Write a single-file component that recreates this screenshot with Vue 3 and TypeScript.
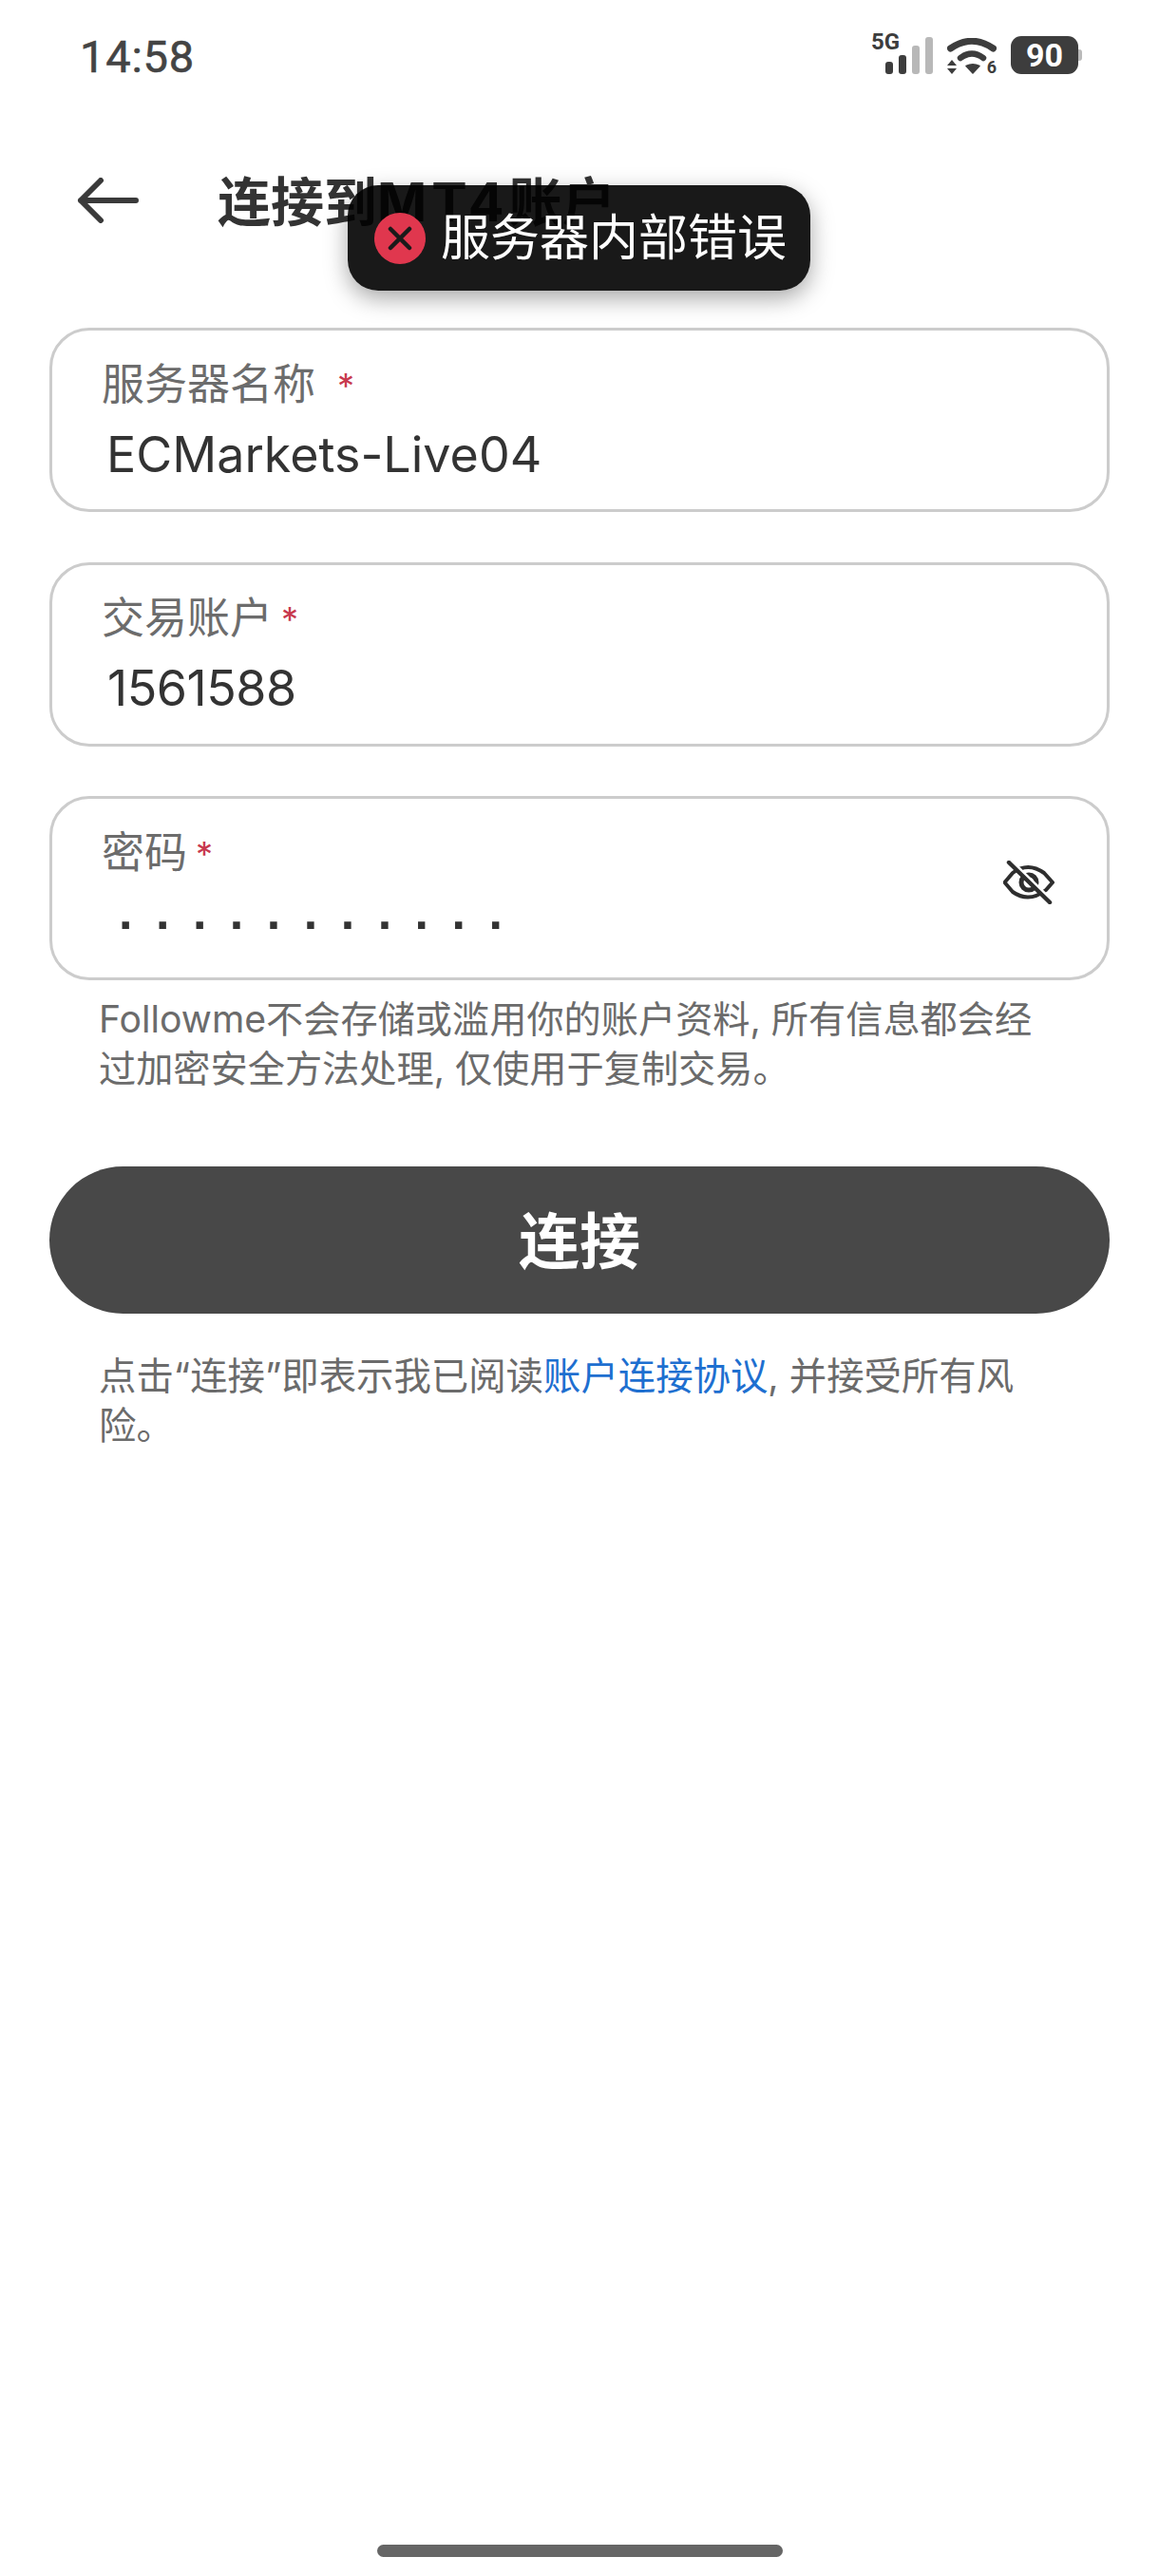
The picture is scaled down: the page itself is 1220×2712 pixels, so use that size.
<script setup lang="ts">
interface Field {
  label: string
  value: string
  kind: string
}
const fields: Field[] = [
  { label: '服务器名称', value: 'ECMarkets-Live04', kind: 'wide' },
  { label: '交易账户', value: '1561588', kind: 'num' },
  { label: '密码', value: '...........', kind: 'dots' },
]
</script>

<template>
  <div class="page">
    <header class="status">
      <span class="time">14:58</span>
      <div class="status-icons">
        <div class="signal">
          <span class="five-g">5G</span>
          <div class="bars">
            <i class="bar b1"></i><i class="bar b2"></i><i class="bar b3"></i><i class="bar b4"></i>
          </div>
        </div>
        <div class="wifi-box">
          <svg class="wifi" width="52" height="38" viewBox="0 0 52 38">
            <path d="M3.5 11 Q26 -4.5 48.5 11" fill="none" stroke="#3d3d3d" stroke-width="7" stroke-linecap="round" />
            <path d="M14 21 Q26 12 38 21" fill="none" stroke="#3d3d3d" stroke-width="6.5" stroke-linecap="round" />
            <path d="M20 29.5 Q27 26 34 29.5 L27 37 Z" fill="#3d3d3d" stroke="#3d3d3d" stroke-width="1.5" stroke-linejoin="round" />
            <path d="M0 29 L5 23 L10 29 Z M0 32 L10 32 L5 38 Z" fill="#3d3d3d" />
          </svg>
          <span class="wifi-six">6</span>
        </div>
        <div class="battery">
          <span class="battery-body">90</span>
          <i class="battery-nub"></i>
        </div>
      </div>
    </header>

    <div class="topbar">
      <svg class="back" width="66" height="48" viewBox="0 0 66 48">
        <path d="M62 24 H4 M25 3 L4 24 L25 45" fill="none" stroke="#3a3a3a" stroke-width="6" stroke-linecap="round" stroke-linejoin="round" />
      </svg>
      <h1 class="title">连接到<span class="title-latin">MT4</span>账户</h1>
    </div>

    <form class="form" @submit.prevent>
      <div v-for="f in fields" :key="f.label" class="field">
        <div class="field-main">
          <div class="label" :class="'label-' + f.kind">{{ f.label }}<span class="star">*</span></div>
          <div class="value" :class="f.kind">{{ f.value }}</div>
        </div>
        <svg v-if="f.kind === 'dots'" class="eye" width="54" height="46" viewBox="0 0 54 46">
          <path d="M1.5 23 L10 13 Q26 1 43 13 L52 23 L45 31 Q27 45 10 33 Z" fill="none" stroke="#2e2e2e" stroke-width="4" stroke-linejoin="round" />
          <circle cx="27" cy="23" r="8" fill="none" stroke="#2e2e2e" stroke-width="5" />
          <path d="M8 1 L51 43" stroke="#ffffff" stroke-width="5" />
          <path d="M6 2 L49 44" stroke="#2e2e2e" stroke-width="4.5" stroke-linecap="round" />
        </svg>
      </div>
    </form>

    <p class="note">Followme不会存储或滥用你的账户资料, 所有信息都会经过加密安全方法处理, 仅使用于复制交易。</p>

    <button class="connect" type="button">连接</button>

    <p class="terms">点击“连接”即表示我已阅读<a class="link">账户连接协议</a>, 并接受所有风险。</p>

    <div class="home-bar"></div>

    <div class="toast">
      <svg class="toast-icon" width="54" height="54" viewBox="0 0 54 54">
        <circle cx="27" cy="27" r="27" fill="#e0374e" />
        <path d="M17 17 L37 37 M37 17 L17 37" stroke="#1a1a1a" stroke-width="4.5" stroke-linecap="round" />
      </svg>
      <span class="toast-text">服务器内部错误</span>
    </div>
  </div>
</template>

<style scoped>
.page {
  position: relative;
  width: 1220px;
  height: 2712px;
  background: #ffffff;
  display: flex;
  flex-direction: column;
  overflow: hidden;
  font-family: Inter, "Noto Sans CJK SC", sans-serif;
  color: #333333;
}
.status {
  height: 92px;
  padding: 26px 81px 0 84px;
  box-sizing: border-box;
  display: flex;
  justify-content: space-between;
  align-items: flex-start;
}
.time {
  font-family: Roboto, sans-serif;
  font-size: 47px;
  line-height: 68px;
  font-weight: 400;
  color: #444444;
  -webkit-text-stroke: 0.6px #444444;
  letter-spacing: 0.8px;
}
.status-icons {
  display: flex;
  align-items: flex-start;
  padding-top: 12px;
  gap: 15px;
}
.signal {
  position: relative;
  width: 65px;
  height: 43px;
}
.five-g {
  position: absolute;
  left: 0;
  top: -6px;
  font-family: Roboto, sans-serif;
  font-size: 24px;
  line-height: 24px;
  font-weight: 700;
  color: #3d3d3d;
}
.bars {
  position: absolute;
  right: 0;
  bottom: 3px;
  display: flex;
  align-items: flex-end;
  gap: 6px;
}
.bar {
  display: block;
  width: 8px;
  border-radius: 3px;
  background: #3d3d3d;
}
.b1 { height: 13px; }
.b2 { height: 20px; }
.b3 { height: 30px; background: #b8b8b8; }
.b4 { height: 39px; background: #b8b8b8; }
.wifi-box {
  position: relative;
  width: 52px;
  height: 40px;
}
.wifi {
  display: block;
  margin-top: 2px;
}
.wifi-six {
  position: absolute;
  right: 0;
  bottom: -2px;
  font-family: Roboto, sans-serif;
  font-size: 18px;
  line-height: 18px;
  font-weight: 700;
  color: #3d3d3d;
}
.battery {
  display: flex;
  align-items: center;
}
.battery-body {
  display: block;
  width: 71px;
  height: 40px;
  border-radius: 11px;
  background: #3d3d3d;
  color: #ffffff;
  font-family: Roboto, sans-serif;
  font-size: 34px;
  line-height: 40px;
  font-weight: 700;
  text-align: center;
}
.battery-nub {
  display: block;
  width: 4px;
  height: 12px;
  border-radius: 0 3px 3px 0;
  background: #bbbbbb;
}
.topbar {
  display: flex;
  align-items: center;
  height: 68px;
  margin-top: 85px;
  padding-left: 81px;
  gap: 82px;
}
.back { flex: none; }
.title {
  margin: 3px 0 0;
  font-size: 56px;
  line-height: 68px;
  font-weight: 700;
  color: #333333;
  white-space: nowrap;
}
.title-latin {
  letter-spacing: 5px;
}
.form {
  display: flex;
  flex-direction: column;
  gap: 52.5px;
  margin: 100px 52px 0;
}
.field {
  display: flex;
  align-items: center;
  justify-content: space-between;
  height: 194px;
  box-sizing: border-box;
  border: 3px solid #cccccc;
  border-radius: 42px;
  padding: 0 55px 0 52px;
}
.label {
  font-size: 45px;
  line-height: 54px;
  color: #6c6c6c;
}
.star {
  color: #c8394e;
  font-size: 36px;
  margin-left: 9px;
  vertical-align: 2px;
}
.label-wide .star { margin-left: 23px; }
.value {
  margin-top: 18px;
  margin-left: 5px;
  font-size: 52px;
  line-height: 56px;
  color: #333333;
}
.value.num {
  margin-left: 6px;
  letter-spacing: -0.5px;
}
.value.dots {
  height: 56px;
  margin-left: 18px;
  font-family: "Liberation Sans", sans-serif;
  font-weight: 700;
  line-height: 32px;
  letter-spacing: 24.5px;
}
.eye {
  flex: none;
  margin-bottom: 12px;
}
.note {
  margin: 15px 0 0;
  padding: 0 110px 0 104px;
  font-size: 39.2px;
  line-height: 52px;
  color: #6b6b6b;
}
.connect {
  display: block;
  margin: 77px 52px 0;
  height: 155px;
  flex: none;
  border: none;
  border-radius: 78px;
  background: #484848;
  color: #ffffff;
  font-family: inherit;
  font-size: 64px;
  font-weight: 700;
  padding: 0 0 7px;
}
.terms {
  margin: 40px 0 0;
  padding: 0 125px 0 104px;
  font-size: 39.4px;
  line-height: 52px;
  color: #6b6b6b;
}
.link { color: #1e6fd0; }
.home-bar {
  margin: auto auto 20px;
  width: 427px;
  height: 13px;
  border-radius: 7px;
  background: #666666;
}
.toast {
  position: absolute;
  left: 366px;
  top: 195px;
  width: 487px;
  height: 111px;
  box-sizing: border-box;
  padding-left: 28px;
  display: flex;
  align-items: center;
  gap: 16px;
  border-radius: 32px;
  background: rgba(0, 0, 0, 0.9);
  box-shadow: 0 8px 24px rgba(0, 0, 0, 0.35);
}
.toast-icon { flex: none; }
.toast-text {
  color: #ffffff;
  font-size: 52px;
  line-height: 60px;
  white-space: nowrap;
}
</style>
